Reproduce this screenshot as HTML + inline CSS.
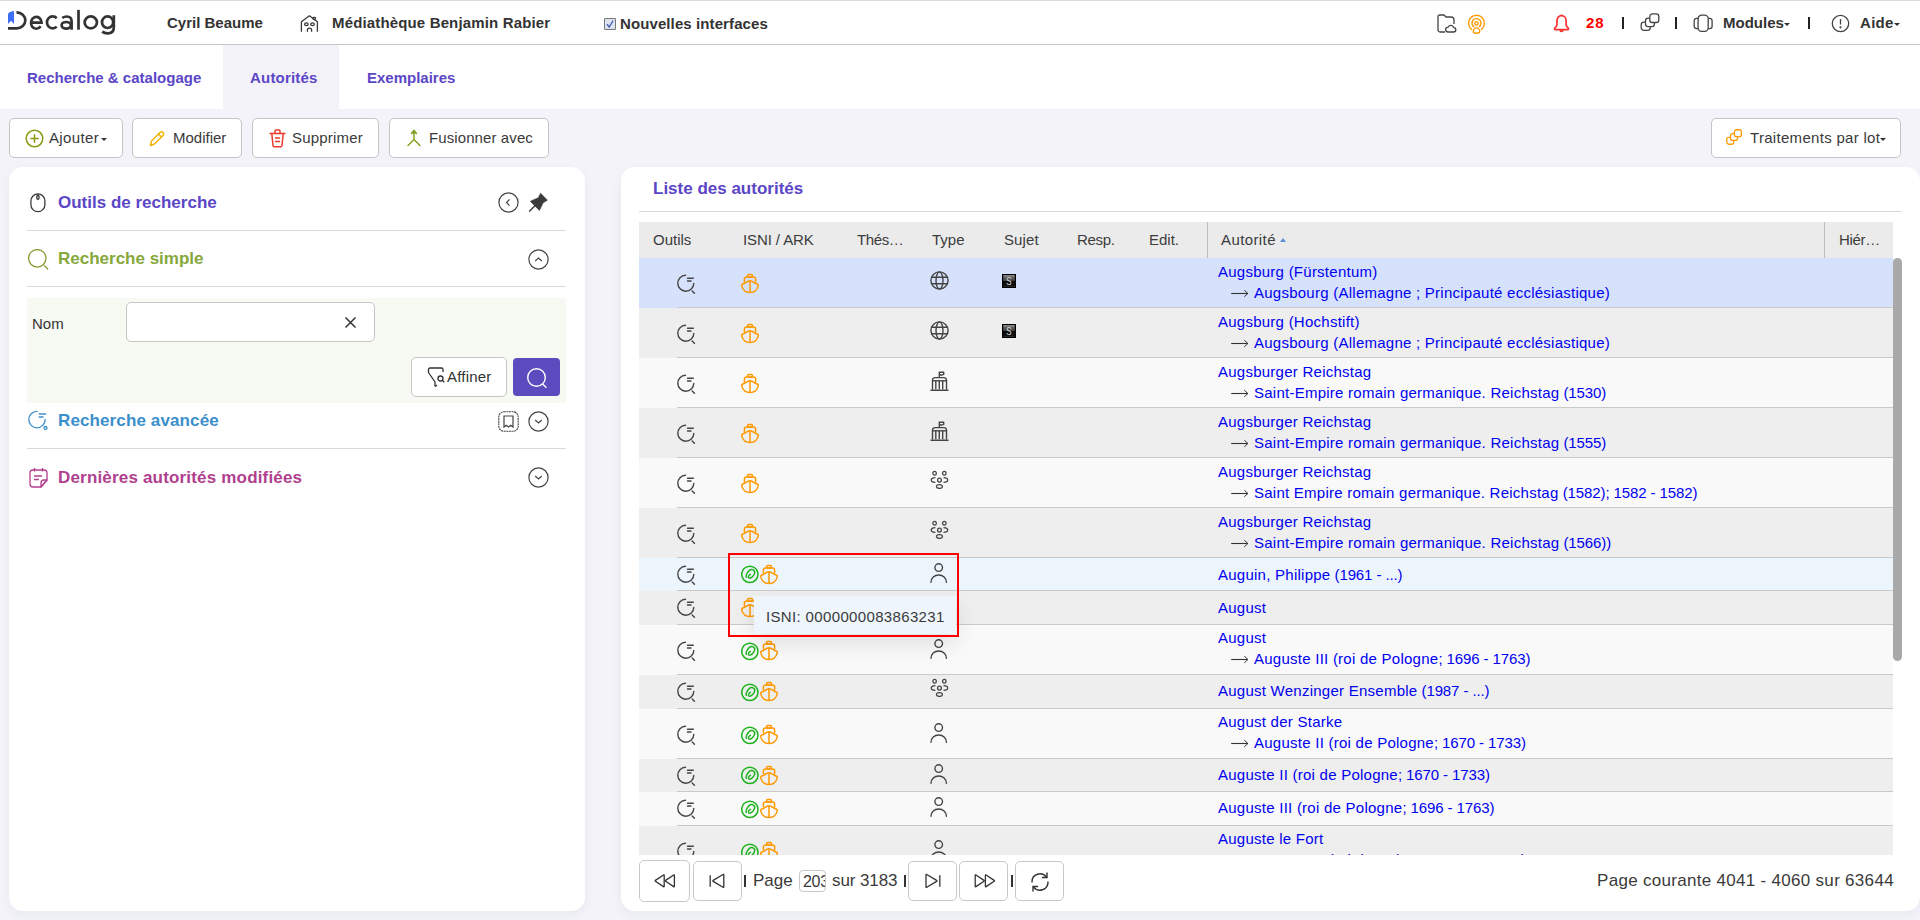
<!DOCTYPE html>
<html><head><meta charset="utf-8">
<style>
*{box-sizing:border-box;margin:0;padding:0}
html,body{width:1920px;height:920px;overflow:hidden}
body{position:relative;background:#f3f3f9;font-family:"Liberation Sans",sans-serif;color:#333}
.abs{position:absolute}
svg{display:block}
#top{position:absolute;left:0;top:0;width:1920px;height:45px;background:#fff;border-top:1px solid #dcdcdc;border-bottom:1px solid #c6c6c6}
.hb{position:absolute;font-weight:bold;font-size:15px;color:#333;line-height:18px;white-space:nowrap}
#tabs{position:absolute;left:0;top:45px;width:1920px;height:64px;background:#fff}
.tab{position:absolute;top:0;height:64px;font-weight:bold;font-size:15px;color:#5b46c6;line-height:18px;padding-top:24px;white-space:nowrap}
.btn{position:absolute;top:118px;height:40px;background:#fff;border:1px solid #c4c4c4;border-radius:5px}
.btn .t{position:absolute;top:10px;font-size:15px;line-height:18px;color:#3a3a3a;white-space:nowrap}
.btn .i{position:absolute}
.panel{position:absolute;background:#fff;border-radius:14px}
.ptitle{position:absolute;font-weight:bold;font-size:17px;line-height:20px;white-space:nowrap}
.sep{position:absolute;height:1px;background:#d9d9d9}
.th{position:absolute;top:0;font-size:15px;line-height:36px;color:#3c3c3c;white-space:nowrap}
.row{position:absolute;left:0;width:1254px}
.rline{position:absolute;left:38px;width:1216px;height:1px;background:#c9c9c9}
.ic{position:absolute}
.au{position:absolute;left:579px;font-size:15px;line-height:18px;color:#0000f0;white-space:nowrap;letter-spacing:0.25px}
.au2{position:absolute;left:592px;font-size:15px;line-height:18px;color:#0000f0;white-space:nowrap;letter-spacing:0.25px}
.arr{color:#222;display:inline-block;width:23px;letter-spacing:0}
.pbtn{position:absolute;top:861px;height:40px;width:49px;background:#fff;border:1px solid #c8c8c8;border-radius:5px}
.pt{position:absolute;font-size:17px;line-height:20px;color:#3a3a3a;white-space:nowrap}
</style></head><body>
<div id="top">
  <!-- logo -->
  <div class="abs" style="left:0px;top:-1px">
    <svg width="120" height="40" viewBox="0 0 120 40" fill="none" stroke="#333" stroke-width="2.7">
      <path d="M8 24 V14.5 Q8 11.5 14 11 V24 L11 20.8 Z" fill="#3d6ff5" stroke="none"/>
      <path d="M8 28.4 H16.5 A8.85 8.05 0 0 0 16.5 12.3" />
      <path d="M31 22.6 H41.6 A5.3 5.95 0 1 0 40.6 26.3" />
      <path d="M56.7 18.2 A5.7 5.95 0 1 0 56.7 26.6" />
      <path d="M62.3 17.9 Q64.5 16.5 66.5 16.5 Q71.6 16.5 71.6 21.2 V29.7" />
      <ellipse cx="66.2" cy="25.3" rx="4.6" ry="3.3"/>
      <path d="M78.5 9.9 V29.7" />
      <ellipse cx="90.8" cy="22.4" rx="6.15" ry="5.95"/>
      <ellipse cx="107.6" cy="22.2" rx="5.6" ry="5.8"/>
      <path d="M113.8 15.3 V27.5 Q113.8 33.3 107.6 33.3 Q104.2 33.3 102.2 31.6" />
    </svg>
  </div>
  <div class="hb" style="left:167px;top:13px">Cyril Beaume</div>
  <div class="abs" style="left:300px;top:13px">
    <svg width="19" height="19" viewBox="0 0 19 19" fill="none" stroke="#383838" stroke-width="1.3" stroke-linejoin="round"><path d="M1.4 17.8V7.8L9.4 1.8L17.4 7.8V17.8"/><rect x="13.1" y="3.3" width="2.3" height="2.3" rx="0.8"/><ellipse cx="6.4" cy="10.3" rx="1.8" ry="1.4"/><ellipse cx="12.5" cy="10.3" rx="1.8" ry="1.4"/><path d="M7.4 17.8V16.2A2.1 2.1 0 0 1 11.6 16.2V17.8"/></svg>
  </div>
  <div class="hb" style="left:332px;top:13px;letter-spacing:0.15px">Médiathèque Benjamin Rabier</div>
  <div class="abs" style="left:604px;top:17px;width:12px;height:12px;border:1px solid #767676;background:#dde3ef;border-radius:1px">
    <svg width="10" height="10" viewBox="0 0 10 10"><path d="M2 5.2 L4.2 8 L8.2 1.5" fill="none" stroke="#4a5fb5" stroke-width="1.4"/></svg>
  </div>
  <div class="hb" style="left:620px;top:14px;letter-spacing:0.1px">Nouvelles interfaces</div>
  <!-- right icons -->
  <div class="abs" style="left:1437px;top:13px">
    <svg width="20" height="20" viewBox="0 0 20 20" fill="none" stroke="#444" stroke-width="1.3" stroke-linejoin="round"><path d="M8 18H3a2 2 0 0 1-2-2V3a2 2 0 0 1 2-2h4l2 2h5a3 3 0 0 1 3 3v4"/><path d="M11 18h5.5a2.2 2.2 0 0 0 .2-4.4 3 3 0 0 0-5.6-.4 2.4 2.4 0 0 0-.1 4.8z"/></svg>
  </div>
  <div class="abs" style="left:1467px;top:13px">
    <svg width="20" height="21" viewBox="0 0 20 21" fill="none" stroke="#ff9a00" stroke-width="1.4" stroke-linecap="round"><path d="M4.6 15.4A7.9 7.9 0 1 1 14.4 15.4"/><path d="M6.7 12.6A4.5 4.5 0 1 1 12.3 12.6"/><circle cx="9.5" cy="9.3" r="1.7"/><path d="M9.5 13.9C7.6 13.9 6.3 15.9 6.3 17.5 6.3 18.7 7.5 19.3 9.5 19.3 11.5 19.3 12.7 18.7 12.7 17.5 12.7 15.9 11.4 13.9 9.5 13.9Z"/></svg>
  </div>
  <div class="abs" style="left:1553px;top:13px">
    <svg width="18" height="20" viewBox="0 0 18 20" fill="none" stroke="#ff3030" stroke-width="1.7" stroke-linejoin="round"><path d="M8.5 1.6C5.6 1.6 3.9 4 3.9 7V10.8C3.9 12.3 2.8 13.1 1.9 13.9 1.1 14.6 1.5 15.7 2.5 15.7H14.5C15.5 15.7 15.9 14.6 15.1 13.9 14.2 13.1 13.1 12.3 13.1 10.8V7C13.1 4 11.4 1.6 8.5 1.6Z"/><path d="M6.9 16.2Q8.5 18.6 10.1 16.2"/><path d="M8.5 0.6V1.6"/></svg>
  </div>
  <div class="hb" style="left:1586px;top:13px;color:#f00;font-size:15px;letter-spacing:1px">28</div>
  <div class="abs" style="left:1622px;top:16px;width:2px;height:12px;background:#222"></div>
  <div class="abs" style="left:1640px;top:12px">
    <svg width="20" height="19" viewBox="0 0 20 19" stroke="#444" stroke-width="1.3"><rect x="1.2" y="9.1" width="9" height="8.2" rx="2.6" fill="#fff"/><rect x="5.5" y="5.2" width="8.9" height="8.5" rx="2.6" fill="#fff"/><rect x="9.8" y="0.9" width="9" height="8.6" rx="2.6" fill="#fff"/></svg>
  </div>
  <div class="abs" style="left:1675px;top:16px;width:2px;height:12px;background:#222"></div>
  <div class="abs" style="left:1693px;top:13px">
    <svg width="21" height="19" viewBox="0 0 21 19" fill="none" stroke="#444" stroke-width="1.3"><rect x="5.1" y="1.2" width="10.1" height="16.1" rx="3.5"/><path d="M5.1 4.3H3.6A2.4 2.4 0 0 0 1.2 6.7V12.2A2.4 2.4 0 0 0 3.6 14.6H5.1M15.2 4.3H16.7A2.4 2.4 0 0 1 19.1 6.7V12.2A2.4 2.4 0 0 1 16.7 14.6H15.2"/></svg>
  </div>
  <div class="hb" style="left:1723px;top:13px">Modules</div>
  <div class="abs" style="left:1784px;top:22px;width:0;height:0;border-left:3px solid transparent;border-right:3px solid transparent;border-top:3px solid #333"></div>
  <div class="abs" style="left:1808px;top:16px;width:2px;height:12px;background:#222"></div>
  <div class="abs" style="left:1831px;top:13px">
    <svg width="19" height="19" viewBox="0 0 19 19" fill="none" stroke="#444" stroke-width="1.3"><circle cx="9.5" cy="9.5" r="8.2"/><path d="M9.5 5v5.5"/><circle cx="9.5" cy="13.3" r="0.5" fill="#444"/></svg>
  </div>
  <div class="hb" style="left:1860px;top:13px;letter-spacing:0.3px">Aide</div>
  <div class="abs" style="left:1894px;top:22px;width:0;height:0;border-left:3px solid transparent;border-right:3px solid transparent;border-top:3px solid #333"></div>
</div>

<div id="tabs">
  <div class="tab" style="left:27px">Recherche &amp; catalogage</div>
  <div class="tab" style="left:223px;width:116px;background:#f3f2f9;padding-left:27px;letter-spacing:0.2px">Autorités</div>
  <div class="tab" style="left:367px">Exemplaires</div>
</div>

<!-- toolbar -->
<div class="btn" style="left:9px;width:114px">
  <div class="i" style="left:15px;top:10px"><svg width="19" height="19" viewBox="0 0 19 19" fill="none" stroke="#8a9a10" stroke-width="1.5"><circle cx="9.5" cy="9.5" r="8.3"/><path d="M9.5 5.3v8.4M5.3 9.5h8.4"/></svg></div>
  <div class="t" style="left:39px;letter-spacing:0.35px">Ajouter</div>
  <div class="abs" style="left:91px;top:19px;border-left:3px solid transparent;border-right:3px solid transparent;border-top:3px solid #333"></div>
</div>
<div class="btn" style="left:132px;width:110px">
  <div class="i" style="left:16px;top:11px"><svg width="17" height="17" viewBox="0 0 17 17" fill="none" stroke="#f0b400" stroke-width="1.5" stroke-linejoin="round"><path d="M1.5 15.5l1-4.5L11 2.5a2.1 2.1 0 0 1 3 3L5.5 14z"/><path d="M9.5 4l3 3"/></svg></div>
  <div class="t" style="left:40px">Modifier</div>
</div>
<div class="btn" style="left:252px;width:127px">
  <div class="i" style="left:16px;top:10px"><svg width="17" height="19" viewBox="0 0 17 19" fill="none" stroke="#ee3a2a" stroke-width="1.5" stroke-linecap="round"><path d="M1 4.5h15"/><path d="M6 4.5V2a1 1 0 0 1 1-1h3a1 1 0 0 1 1 1v2.5"/><path d="M2.8 4.5l1.2 12a1.5 1.5 0 0 0 1.5 1.3h6a1.5 1.5 0 0 0 1.5-1.3l1.2-12"/><path d="M6.5 9h4M6.5 12.5h4"/></svg></div>
  <div class="t" style="left:39px;letter-spacing:0.2px">Supprimer</div>
</div>
<div class="btn" style="left:389px;width:160px">
  <div class="i" style="left:16px;top:10px"><svg width="16" height="18" viewBox="0 0 16 18" fill="none" stroke="#84a020" stroke-width="1.5" stroke-linecap="round"><path d="M8 2v8.5L2 16.5M8 10.5l6 6"/><path d="M5.5 4.5L8 1.5l2.5 3" fill="#84a020"/></svg></div>
  <div class="t" style="left:39px;letter-spacing:0.1px">Fusionner avec</div>
</div>
<div class="btn" style="left:1711px;width:190px">
  <div class="i" style="left:14px;top:10px"><svg width="18" height="18" viewBox="0 0 18 18" fill="#fff" stroke="#ff9a00" stroke-width="1.3"><rect x="0.75" y="8.35" width="6.9" height="6.9" rx="2"/><rect x="4.6" y="4.55" width="6.9" height="6.9" rx="2"/><rect x="8.45" y="0.75" width="6.9" height="6.9" rx="2"/></svg></div>
  <div class="t" style="left:38px;letter-spacing:0.3px">Traitements par lot</div>
  <div class="abs" style="left:168px;top:19px;border-left:3px solid transparent;border-right:3px solid transparent;border-top:3px solid #333"></div>
</div>

<!-- left panel -->
<div class="panel" style="left:9px;top:167px;width:576px;height:744px;box-shadow:0 4px 12px rgba(40,40,90,0.05)">
</div>
<div class="abs" style="left:29px;top:192px">
  <svg width="18" height="21" viewBox="0 0 18 21" fill="none" stroke="#383838" stroke-width="1.3"><rect x="1.9" y="1.9" width="14" height="17.8" rx="7"/><path d="M8.9 1.9V3.4"/><rect x="7.8" y="3.5" width="2.2" height="3.8" rx="1.1"/></svg>
</div>
<div class="ptitle" style="left:58px;top:193px;color:#5b46c6">Outils de recherche</div>
<div class="abs" style="left:498px;top:192px">
  <svg width="21" height="21" viewBox="0 0 21 21" fill="none" stroke="#444" stroke-width="1.2"><circle cx="10.5" cy="10.5" r="9.6"/><path d="M11.5 7.3l-3 3.2 3 3.2"/></svg>
</div>
<div class="abs" style="left:528px;top:192px">
  <svg width="21" height="21" viewBox="0 0 21 21"><path d="M12.6 1.2L19.4 8.2L15.2 10.7L11.4 18.5L2.3 9.3L10.3 5.7Z" fill="#3a3a3a" stroke="#3a3a3a" stroke-width="0.6" stroke-linejoin="round"/><path d="M7.2 13.4L1.2 19.6" stroke="#3a3a3a" stroke-width="1.4"/></svg>
</div>
<div class="sep" style="left:27px;top:230px;width:539px"></div>

<div class="abs" style="left:28px;top:249px">
  <svg width="22" height="22" viewBox="0 0 22 22" fill="none" stroke="#86962a" stroke-width="1.25" stroke-linecap="round"><circle cx="9.3" cy="9.3" r="8.7"/><path d="M16.3 16.6l3.4 3.4"/></svg>
</div>
<div class="ptitle" style="left:58px;top:249px;color:#86a83c">Recherche simple</div>
<div class="abs" style="left:528px;top:249px">
  <svg width="21" height="21" viewBox="0 0 21 21" fill="none" stroke="#444" stroke-width="1.2"><circle cx="10.5" cy="10.5" r="9.6"/><path d="M7.2 12l3.3-3 3.3 3"/></svg>
</div>
<div class="sep" style="left:27px;top:286px;width:539px"></div>

<div class="abs" style="left:27px;top:298px;width:539px;height:105px;background:#f7f9f3"></div>
<div class="abs" style="left:32px;top:315px;font-size:15px;line-height:18px;color:#333">Nom</div>
<div class="abs" style="left:126px;top:302px;width:249px;height:40px;background:#fff;border:1px solid #c6c6c6;border-radius:5px"></div>
<div class="abs" style="left:344px;top:316px">
  <svg width="13" height="13" viewBox="0 0 13 13" stroke="#333" stroke-width="1.5"><path d="M1.5 1.5l10 10M11.5 1.5l-10 10"/></svg>
</div>
<div class="abs" style="left:411px;top:357px;width:96px;height:40px;background:#fff;border:1px solid #c6c6c6;border-radius:5px"></div>
<div class="abs" style="left:427px;top:367px">
  <svg width="20" height="21" viewBox="0 0 20 21" fill="none" stroke="#333" stroke-width="1.3" stroke-linejoin="round"><path d="M8 19.5V15L1.5 5.5V2.5a1.5 1.5 0 0 1 1.5-1.5h11.5a1.5 1.5 0 0 1 1.5 1.5v2.5"/><path d="M8 19.5l2-1.5"/><circle cx="13.5" cy="11.5" r="2.5"/><path d="M15.3 13.3l2 2"/></svg>
</div>
<div class="abs" style="left:447px;top:368px;font-size:15px;line-height:18px;color:#333;letter-spacing:0.2px">Affiner</div>
<div class="abs" style="left:513px;top:358px;width:47px;height:38px;background:#5b4bbf;border-radius:4px"></div>
<div class="abs" style="left:526px;top:367px">
  <svg width="22" height="22" viewBox="0 0 22 22" fill="none" stroke="#fff" stroke-width="1.4" stroke-linecap="round"><circle cx="10.5" cy="10.5" r="8.8"/><path d="M17.2 17.5l2.8 2.8"/></svg>
</div>

<div class="abs" style="left:27px;top:410px">
  <svg width="23" height="22" viewBox="0 0 23 22" fill="none" stroke="#3d8fcc" stroke-width="1.3" stroke-linecap="round"><path d="M10 1.4A8.2 8.2 0 1 0 18.2 9.6"/><path d="M12.2 4H18.6M12.2 7H16"/><circle cx="18.5" cy="18" r="1.5"/></svg>
</div>
<div class="ptitle" style="left:58px;top:411px;color:#3b8fcb;letter-spacing:0.12px">Recherche avancée</div>
<div class="abs" style="left:498px;top:411px">
  <svg width="21" height="21" viewBox="0 0 21 21" fill="none" stroke="#444" stroke-width="1.1"><rect x="0.8" y="0.8" width="19.4" height="19.4" rx="5" stroke-dasharray="2 0.6"/><path d="M6 5h9v11l-2.2-1.8-2.3 1.8-2.3-1.8L6 16z" stroke-width="1.2"/></svg>
</div>
<div class="abs" style="left:528px;top:411px">
  <svg width="21" height="21" viewBox="0 0 21 21" fill="none" stroke="#444" stroke-width="1.2"><circle cx="10.5" cy="10.5" r="9.6"/><path d="M7.2 9l3.3 3 3.3-3"/></svg>
</div>
<div class="sep" style="left:27px;top:448px;width:539px"></div>

<div class="abs" style="left:29px;top:467px">
  <svg width="20" height="22" viewBox="0 0 20 22" fill="none" stroke="#b3408f" stroke-width="1.3" stroke-linejoin="round"><path d="M18 13V6a3 3 0 0 0-3-3H4a3 3 0 0 0-3 3v11a3 3 0 0 0 3 3h8z"/><path d="M18 13l-6 7v-4a3 3 0 0 1 3-3z"/><path d="M5.5 1v3.5M13.5 1v3.5"/><path d="M5 9h8M5 12.5h5"/></svg>
</div>
<div class="ptitle" style="left:58px;top:468px;color:#b0408f;letter-spacing:0.18px">Dernières autorités modifiées</div>
<div class="abs" style="left:528px;top:467px">
  <svg width="21" height="21" viewBox="0 0 21 21" fill="none" stroke="#444" stroke-width="1.2"><circle cx="10.5" cy="10.5" r="9.6"/><path d="M7.2 9l3.3 3 3.3-3"/></svg>
</div>

<!-- right panel -->
<div class="panel" style="left:621px;top:167px;width:1299px;height:744px;box-shadow:0 4px 12px rgba(40,40,90,0.05)"></div>
<div class="ptitle" style="left:653px;top:179px;color:#5b46c6">Liste des autorités</div>
<div class="sep" style="left:639px;top:211px;width:1263px"></div>

<!-- table -->
<div class="abs" style="left:639px;top:222px;width:1254px;height:633px;overflow:hidden">
  <div class="abs" style="left:0;top:0;width:1254px;height:36px;background:#ebebeb">
    <div class="th" style="left:14px">Outils</div>
    <div class="th" style="left:104px;letter-spacing:-0.1px">ISNI / ARK</div>
    <div class="th" style="left:218px;letter-spacing:-0.4px">Thés…</div>
    <div class="th" style="left:293px">Type</div>
    <div class="th" style="left:365px;letter-spacing:0.1px">Sujet</div>
    <div class="th" style="left:438px;letter-spacing:-0.3px">Resp.</div>
    <div class="th" style="left:510px">Edit.</div>
    <div class="abs" style="left:568px;top:0;width:1px;height:36px;background:#bdbdbd"></div>
    <div class="th" style="left:582px;letter-spacing:0.4px">Autorité</div>
    <div class="abs" style="left:641px;top:16px;border-left:3.5px solid transparent;border-right:3.5px solid transparent;border-bottom:4px solid #5b8fd6"></div>
    <div class="abs" style="left:1185px;top:0;width:1px;height:36px;background:#bdbdbd"></div>
    <div class="th" style="left:1200px;letter-spacing:-0.3px">Hiér…</div>
  </div>
  <div class="abs" style="left:0;top:36px;width:1254px;height:600px">
  <div class="row" style="top:0px;height:50px;background:#d6e1fc"><div class="ic" style="left:37px;top:16.0px"><svg width="20" height="20" viewBox="0 0 20 20" fill="none" stroke="#444" stroke-width="1.4" stroke-linecap="round"><path d="M9.5 1.2 A8 8 0 1 0 17.8 9.5"/><path d="M11.5 4.3h5.8M11.5 7h3.5"/><path d="M16.2 17l2.2 2.2"/></svg></div><div class="ic" style="left:102px;top:15.0px"><svg width="19" height="21" viewBox="0 0 19 21" fill="none" stroke="#ff9900" stroke-width="1.5" stroke-linejoin="round"><rect x="6.6" y="1.6" width="4.8" height="2.6" rx="1"/><path d="M3.4 9.5V6a2 2 0 0 1 2-2h7.2a2 2 0 0 1 2 2v3.5"/><path d="M9 7.8C6 7.8 4.6 10.6 1.8 11.1 0.6 11.3 0.6 12.4 0.9 13.4 2 17.2 5 19.6 9 19.6 13 19.6 16 17.2 17.1 13.4 17.4 12.4 17.4 11.3 16.2 11.1 13.4 10.6 12 7.8 9 7.8Z"/><path d="M9 7.8V19.6"/></svg></div><div class="ic" style="left:291px;top:13.0px"><svg width="19" height="19" viewBox="0 0 19 19" fill="none" stroke="#444" stroke-width="1.4"><circle cx="9.5" cy="9.5" r="8.6"/><ellipse cx="9.5" cy="9.5" rx="3.5" ry="8.6"/><path d="M1.2 6.3h16.6M1.2 12.8h16.6"/></svg></div><div class="ic" style="left:363px;top:16.0px"><svg width="14" height="14" viewBox="0 0 14 14"><defs><linearGradient id="sg" x1="0" y1="0" x2="0" y2="1"><stop offset="0" stop-color="#000"/><stop offset="0.1" stop-color="#aaa"/><stop offset="0.2" stop-color="#666"/><stop offset="0.47" stop-color="#444"/><stop offset="0.5" stop-color="#080808"/><stop offset="0.85" stop-color="#111"/><stop offset="0.92" stop-color="#444"/><stop offset="1" stop-color="#000"/></linearGradient></defs><rect x="0" y="0" width="14" height="14" fill="url(#sg)"/><rect x="0.6" y="0.6" width="12.8" height="12.8" fill="none" stroke="#000" stroke-width="1.2"/><text x="8.7" y="10.9" text-anchor="middle" font-family="Liberation Sans" font-size="10" fill="#d8d8d8" transform="scale(0.8 1)">S</text></svg></div><div class="au" style="top:5px">Augsburg (Fürstentum)</div><div class="au2" style="top:26px"><span class="arr"><svg width="23" height="18" viewBox="0 0 23 18" style="display:inline-block;vertical-align:top"><path d="M0.2 9.5H16.8" stroke="#333" stroke-width="1.1"/><path d="M13.3 6.2L16.9 9.5 13.3 12.8" fill="none" stroke="#333" stroke-width="1"/></svg></span>Augsbourg (Allemagne ; Principauté ecclésiastique)</div></div><div class="row" style="top:50px;height:50px;background:#eeeeee"><div class="ic" style="left:37px;top:16.0px"><svg width="20" height="20" viewBox="0 0 20 20" fill="none" stroke="#444" stroke-width="1.4" stroke-linecap="round"><path d="M9.5 1.2 A8 8 0 1 0 17.8 9.5"/><path d="M11.5 4.3h5.8M11.5 7h3.5"/><path d="M16.2 17l2.2 2.2"/></svg></div><div class="ic" style="left:102px;top:15.0px"><svg width="19" height="21" viewBox="0 0 19 21" fill="none" stroke="#ff9900" stroke-width="1.5" stroke-linejoin="round"><rect x="6.6" y="1.6" width="4.8" height="2.6" rx="1"/><path d="M3.4 9.5V6a2 2 0 0 1 2-2h7.2a2 2 0 0 1 2 2v3.5"/><path d="M9 7.8C6 7.8 4.6 10.6 1.8 11.1 0.6 11.3 0.6 12.4 0.9 13.4 2 17.2 5 19.6 9 19.6 13 19.6 16 17.2 17.1 13.4 17.4 12.4 17.4 11.3 16.2 11.1 13.4 10.6 12 7.8 9 7.8Z"/><path d="M9 7.8V19.6"/></svg></div><div class="ic" style="left:291px;top:13.0px"><svg width="19" height="19" viewBox="0 0 19 19" fill="none" stroke="#444" stroke-width="1.4"><circle cx="9.5" cy="9.5" r="8.6"/><ellipse cx="9.5" cy="9.5" rx="3.5" ry="8.6"/><path d="M1.2 6.3h16.6M1.2 12.8h16.6"/></svg></div><div class="ic" style="left:363px;top:16.0px"><svg width="14" height="14" viewBox="0 0 14 14"><defs><linearGradient id="sg" x1="0" y1="0" x2="0" y2="1"><stop offset="0" stop-color="#000"/><stop offset="0.1" stop-color="#aaa"/><stop offset="0.2" stop-color="#666"/><stop offset="0.47" stop-color="#444"/><stop offset="0.5" stop-color="#080808"/><stop offset="0.85" stop-color="#111"/><stop offset="0.92" stop-color="#444"/><stop offset="1" stop-color="#000"/></linearGradient></defs><rect x="0" y="0" width="14" height="14" fill="url(#sg)"/><rect x="0.6" y="0.6" width="12.8" height="12.8" fill="none" stroke="#000" stroke-width="1.2"/><text x="8.7" y="10.9" text-anchor="middle" font-family="Liberation Sans" font-size="10" fill="#d8d8d8" transform="scale(0.8 1)">S</text></svg></div><div class="au" style="top:5px">Augsburg (Hochstift)</div><div class="au2" style="top:26px"><span class="arr"><svg width="23" height="18" viewBox="0 0 23 18" style="display:inline-block;vertical-align:top"><path d="M0.2 9.5H16.8" stroke="#333" stroke-width="1.1"/><path d="M13.3 6.2L16.9 9.5 13.3 12.8" fill="none" stroke="#333" stroke-width="1"/></svg></span>Augsbourg (Allemagne ; Principauté ecclésiastique)</div></div><div class="rline" style="top:49px"></div><div class="row" style="top:100px;height:50px;background:#f9f9f9"><div class="ic" style="left:37px;top:16.0px"><svg width="20" height="20" viewBox="0 0 20 20" fill="none" stroke="#444" stroke-width="1.4" stroke-linecap="round"><path d="M9.5 1.2 A8 8 0 1 0 17.8 9.5"/><path d="M11.5 4.3h5.8M11.5 7h3.5"/><path d="M16.2 17l2.2 2.2"/></svg></div><div class="ic" style="left:102px;top:15.0px"><svg width="19" height="21" viewBox="0 0 19 21" fill="none" stroke="#ff9900" stroke-width="1.5" stroke-linejoin="round"><rect x="6.6" y="1.6" width="4.8" height="2.6" rx="1"/><path d="M3.4 9.5V6a2 2 0 0 1 2-2h7.2a2 2 0 0 1 2 2v3.5"/><path d="M9 7.8C6 7.8 4.6 10.6 1.8 11.1 0.6 11.3 0.6 12.4 0.9 13.4 2 17.2 5 19.6 9 19.6 13 19.6 16 17.2 17.1 13.4 17.4 12.4 17.4 11.3 16.2 11.1 13.4 10.6 12 7.8 9 7.8Z"/><path d="M9 7.8V19.6"/></svg></div><div class="ic" style="left:291px;top:13.0px"><svg width="19" height="20" viewBox="0 0 19 20" fill="none" stroke="#444" stroke-width="1.4" stroke-linejoin="round"><path d="M9.3 6.5V1.2h4.4v2.2l-2.2.8-2.2-.8"/><path d="M2.5 18.5V9.2a2.6 2.6 0 0 1 2.6-2.6h8.8a2.6 2.6 0 0 1 2.6 2.6v9.3"/><path d="M2.5 9.8h14"/><path d="M5.8 10v8.3M9.3 10v8.3M12.7 10v8.3"/><path d="M0.5 19.3h18" stroke-width="1.6"/></svg></div><div class="au" style="top:5px">Augsburger Reichstag</div><div class="au2" style="top:26px"><span class="arr"><svg width="23" height="18" viewBox="0 0 23 18" style="display:inline-block;vertical-align:top"><path d="M0.2 9.5H16.8" stroke="#333" stroke-width="1.1"/><path d="M13.3 6.2L16.9 9.5 13.3 12.8" fill="none" stroke="#333" stroke-width="1"/></svg></span>Saint-Empire romain germanique. Reichstag<span style="letter-spacing:-0.1px"> (1530)</span></div></div><div class="rline" style="top:99px"></div><div class="row" style="top:150px;height:50px;background:#eeeeee"><div class="ic" style="left:37px;top:16.0px"><svg width="20" height="20" viewBox="0 0 20 20" fill="none" stroke="#444" stroke-width="1.4" stroke-linecap="round"><path d="M9.5 1.2 A8 8 0 1 0 17.8 9.5"/><path d="M11.5 4.3h5.8M11.5 7h3.5"/><path d="M16.2 17l2.2 2.2"/></svg></div><div class="ic" style="left:102px;top:15.0px"><svg width="19" height="21" viewBox="0 0 19 21" fill="none" stroke="#ff9900" stroke-width="1.5" stroke-linejoin="round"><rect x="6.6" y="1.6" width="4.8" height="2.6" rx="1"/><path d="M3.4 9.5V6a2 2 0 0 1 2-2h7.2a2 2 0 0 1 2 2v3.5"/><path d="M9 7.8C6 7.8 4.6 10.6 1.8 11.1 0.6 11.3 0.6 12.4 0.9 13.4 2 17.2 5 19.6 9 19.6 13 19.6 16 17.2 17.1 13.4 17.4 12.4 17.4 11.3 16.2 11.1 13.4 10.6 12 7.8 9 7.8Z"/><path d="M9 7.8V19.6"/></svg></div><div class="ic" style="left:291px;top:13.0px"><svg width="19" height="20" viewBox="0 0 19 20" fill="none" stroke="#444" stroke-width="1.4" stroke-linejoin="round"><path d="M9.3 6.5V1.2h4.4v2.2l-2.2.8-2.2-.8"/><path d="M2.5 18.5V9.2a2.6 2.6 0 0 1 2.6-2.6h8.8a2.6 2.6 0 0 1 2.6 2.6v9.3"/><path d="M2.5 9.8h14"/><path d="M5.8 10v8.3M9.3 10v8.3M12.7 10v8.3"/><path d="M0.5 19.3h18" stroke-width="1.6"/></svg></div><div class="au" style="top:5px">Augsburger Reichstag</div><div class="au2" style="top:26px"><span class="arr"><svg width="23" height="18" viewBox="0 0 23 18" style="display:inline-block;vertical-align:top"><path d="M0.2 9.5H16.8" stroke="#333" stroke-width="1.1"/><path d="M13.3 6.2L16.9 9.5 13.3 12.8" fill="none" stroke="#333" stroke-width="1"/></svg></span>Saint-Empire romain germanique. Reichstag<span style="letter-spacing:-0.1px"> (1555)</span></div></div><div class="rline" style="top:149px"></div><div class="row" style="top:200px;height:50px;background:#f9f9f9"><div class="ic" style="left:37px;top:16.0px"><svg width="20" height="20" viewBox="0 0 20 20" fill="none" stroke="#444" stroke-width="1.4" stroke-linecap="round"><path d="M9.5 1.2 A8 8 0 1 0 17.8 9.5"/><path d="M11.5 4.3h5.8M11.5 7h3.5"/><path d="M16.2 17l2.2 2.2"/></svg></div><div class="ic" style="left:102px;top:15.0px"><svg width="19" height="21" viewBox="0 0 19 21" fill="none" stroke="#ff9900" stroke-width="1.5" stroke-linejoin="round"><rect x="6.6" y="1.6" width="4.8" height="2.6" rx="1"/><path d="M3.4 9.5V6a2 2 0 0 1 2-2h7.2a2 2 0 0 1 2 2v3.5"/><path d="M9 7.8C6 7.8 4.6 10.6 1.8 11.1 0.6 11.3 0.6 12.4 0.9 13.4 2 17.2 5 19.6 9 19.6 13 19.6 16 17.2 17.1 13.4 17.4 12.4 17.4 11.3 16.2 11.1 13.4 10.6 12 7.8 9 7.8Z"/><path d="M9 7.8V19.6"/></svg></div><div class="ic" style="left:291px;top:12.0px"><svg width="19" height="19" viewBox="0 0 19 19" fill="none" stroke="#444" stroke-width="1.3"><rect x="2.9" y="1.4" width="3.4" height="3.7" rx="1.6"/><rect x="12.6" y="1.4" width="3.4" height="3.7" rx="1.6"/><ellipse cx="9.45" cy="10.05" rx="1.9" ry="2"/><path d="M5.4 7.7C2.6 7.7 1.2 8.8 1.2 10S2.6 12.3 5.4 12.3M13.5 7.7C16.3 7.7 17.7 8.8 17.7 10S16.3 12.3 13.5 12.3"/><ellipse cx="9.45" cy="16.5" rx="3" ry="1.9"/></svg></div><div class="au" style="top:5px">Augsburger Reichstag</div><div class="au2" style="top:26px"><span class="arr"><svg width="23" height="18" viewBox="0 0 23 18" style="display:inline-block;vertical-align:top"><path d="M0.2 9.5H16.8" stroke="#333" stroke-width="1.1"/><path d="M13.3 6.2L16.9 9.5 13.3 12.8" fill="none" stroke="#333" stroke-width="1"/></svg></span>Saint Empire romain germanique. Reichstag<span style="letter-spacing:-0.1px"> (1582); 1582 - 1582)</span></div></div><div class="rline" style="top:199px"></div><div class="row" style="top:250px;height:50px;background:#eeeeee"><div class="ic" style="left:37px;top:16.0px"><svg width="20" height="20" viewBox="0 0 20 20" fill="none" stroke="#444" stroke-width="1.4" stroke-linecap="round"><path d="M9.5 1.2 A8 8 0 1 0 17.8 9.5"/><path d="M11.5 4.3h5.8M11.5 7h3.5"/><path d="M16.2 17l2.2 2.2"/></svg></div><div class="ic" style="left:102px;top:15.0px"><svg width="19" height="21" viewBox="0 0 19 21" fill="none" stroke="#ff9900" stroke-width="1.5" stroke-linejoin="round"><rect x="6.6" y="1.6" width="4.8" height="2.6" rx="1"/><path d="M3.4 9.5V6a2 2 0 0 1 2-2h7.2a2 2 0 0 1 2 2v3.5"/><path d="M9 7.8C6 7.8 4.6 10.6 1.8 11.1 0.6 11.3 0.6 12.4 0.9 13.4 2 17.2 5 19.6 9 19.6 13 19.6 16 17.2 17.1 13.4 17.4 12.4 17.4 11.3 16.2 11.1 13.4 10.6 12 7.8 9 7.8Z"/><path d="M9 7.8V19.6"/></svg></div><div class="ic" style="left:291px;top:12.0px"><svg width="19" height="19" viewBox="0 0 19 19" fill="none" stroke="#444" stroke-width="1.3"><rect x="2.9" y="1.4" width="3.4" height="3.7" rx="1.6"/><rect x="12.6" y="1.4" width="3.4" height="3.7" rx="1.6"/><ellipse cx="9.45" cy="10.05" rx="1.9" ry="2"/><path d="M5.4 7.7C2.6 7.7 1.2 8.8 1.2 10S2.6 12.3 5.4 12.3M13.5 7.7C16.3 7.7 17.7 8.8 17.7 10S16.3 12.3 13.5 12.3"/><ellipse cx="9.45" cy="16.5" rx="3" ry="1.9"/></svg></div><div class="au" style="top:5px">Augsburger Reichstag</div><div class="au2" style="top:26px"><span class="arr"><svg width="23" height="18" viewBox="0 0 23 18" style="display:inline-block;vertical-align:top"><path d="M0.2 9.5H16.8" stroke="#333" stroke-width="1.1"/><path d="M13.3 6.2L16.9 9.5 13.3 12.8" fill="none" stroke="#333" stroke-width="1"/></svg></span>Saint-Empire romain germanique. Reichstag<span style="letter-spacing:-0.1px"> (1566))</span></div></div><div class="rline" style="top:249px"></div><div class="row" style="top:300px;height:33px;background:#ecf4fc"><div class="ic" style="left:37px;top:6.5px"><svg width="20" height="20" viewBox="0 0 20 20" fill="none" stroke="#444" stroke-width="1.4" stroke-linecap="round"><path d="M9.5 1.2 A8 8 0 1 0 17.8 9.5"/><path d="M11.5 4.3h5.8M11.5 7h3.5"/><path d="M16.2 17l2.2 2.2"/></svg></div><div class="ic" style="left:102px;top:7.0px"><svg width="19" height="19" viewBox="0 0 19 19" fill="none" stroke="#1db31d" stroke-width="1.5" stroke-linecap="round"><circle cx="8.85" cy="9.35" r="8.15"/><path d="M5.3 12.4C4.4 11 6.4 7.2 8.4 5.4 9.8 4.1 12 4.2 13.2 5.8 14.2 7.2 13.4 9.6 11.6 11.6 10.4 13 8.4 13.8 7.6 12.6 7 11.6 8 10.2 9.4 9.4"/></svg></div><div class="ic" style="left:121px;top:5.5px"><svg width="19" height="21" viewBox="0 0 19 21" fill="none" stroke="#ff9900" stroke-width="1.5" stroke-linejoin="round"><rect x="6.6" y="1.6" width="4.8" height="2.6" rx="1"/><path d="M3.4 9.5V6a2 2 0 0 1 2-2h7.2a2 2 0 0 1 2 2v3.5"/><path d="M9 7.8C6 7.8 4.6 10.6 1.8 11.1 0.6 11.3 0.6 12.4 0.9 13.4 2 17.2 5 19.6 9 19.6 13 19.6 16 17.2 17.1 13.4 17.4 12.4 17.4 11.3 16.2 11.1 13.4 10.6 12 7.8 9 7.8Z"/><path d="M9 7.8V19.6"/></svg></div><div class="ic" style="left:291px;top:4.5px"><svg width="18" height="20" viewBox="0 0 18 20" fill="none" stroke="#444" stroke-width="1.4" stroke-linecap="round"><circle cx="8.7" cy="4.6" r="3.8"/><path d="M1 19.3c0-4.4 3.5-7.3 7.7-7.3s7.7 2.9 7.7 7.3"/></svg></div><div class="au" style="top:7.5px">Auguin, Philippe<span style="letter-spacing:-0.1px"> (1961 - ...)</span></div></div><div class="rline" style="top:299px"></div><div class="row" style="top:333px;height:34px;background:#eeeeee"><div class="ic" style="left:37px;top:7.0px"><svg width="20" height="20" viewBox="0 0 20 20" fill="none" stroke="#444" stroke-width="1.4" stroke-linecap="round"><path d="M9.5 1.2 A8 8 0 1 0 17.8 9.5"/><path d="M11.5 4.3h5.8M11.5 7h3.5"/><path d="M16.2 17l2.2 2.2"/></svg></div><div class="ic" style="left:102px;top:6.0px"><svg width="19" height="21" viewBox="0 0 19 21" fill="none" stroke="#ff9900" stroke-width="1.5" stroke-linejoin="round"><rect x="6.6" y="1.6" width="4.8" height="2.6" rx="1"/><path d="M3.4 9.5V6a2 2 0 0 1 2-2h7.2a2 2 0 0 1 2 2v3.5"/><path d="M9 7.8C6 7.8 4.6 10.6 1.8 11.1 0.6 11.3 0.6 12.4 0.9 13.4 2 17.2 5 19.6 9 19.6 13 19.6 16 17.2 17.1 13.4 17.4 12.4 17.4 11.3 16.2 11.1 13.4 10.6 12 7.8 9 7.8Z"/><path d="M9 7.8V19.6"/></svg></div><div class="au" style="top:8.0px">August</div></div><div class="rline" style="top:332px"></div><div class="row" style="top:367px;height:50px;background:#f9f9f9"><div class="ic" style="left:37px;top:16.0px"><svg width="20" height="20" viewBox="0 0 20 20" fill="none" stroke="#444" stroke-width="1.4" stroke-linecap="round"><path d="M9.5 1.2 A8 8 0 1 0 17.8 9.5"/><path d="M11.5 4.3h5.8M11.5 7h3.5"/><path d="M16.2 17l2.2 2.2"/></svg></div><div class="ic" style="left:102px;top:16.5px"><svg width="19" height="19" viewBox="0 0 19 19" fill="none" stroke="#1db31d" stroke-width="1.5" stroke-linecap="round"><circle cx="8.85" cy="9.35" r="8.15"/><path d="M5.3 12.4C4.4 11 6.4 7.2 8.4 5.4 9.8 4.1 12 4.2 13.2 5.8 14.2 7.2 13.4 9.6 11.6 11.6 10.4 13 8.4 13.8 7.6 12.6 7 11.6 8 10.2 9.4 9.4"/></svg></div><div class="ic" style="left:121px;top:15.0px"><svg width="19" height="21" viewBox="0 0 19 21" fill="none" stroke="#ff9900" stroke-width="1.5" stroke-linejoin="round"><rect x="6.6" y="1.6" width="4.8" height="2.6" rx="1"/><path d="M3.4 9.5V6a2 2 0 0 1 2-2h7.2a2 2 0 0 1 2 2v3.5"/><path d="M9 7.8C6 7.8 4.6 10.6 1.8 11.1 0.6 11.3 0.6 12.4 0.9 13.4 2 17.2 5 19.6 9 19.6 13 19.6 16 17.2 17.1 13.4 17.4 12.4 17.4 11.3 16.2 11.1 13.4 10.6 12 7.8 9 7.8Z"/><path d="M9 7.8V19.6"/></svg></div><div class="ic" style="left:291px;top:14.0px"><svg width="18" height="20" viewBox="0 0 18 20" fill="none" stroke="#444" stroke-width="1.4" stroke-linecap="round"><circle cx="8.7" cy="4.6" r="3.8"/><path d="M1 19.3c0-4.4 3.5-7.3 7.7-7.3s7.7 2.9 7.7 7.3"/></svg></div><div class="au" style="top:4px">August</div><div class="au2" style="top:25px"><span class="arr"><svg width="23" height="18" viewBox="0 0 23 18" style="display:inline-block;vertical-align:top"><path d="M0.2 9.5H16.8" stroke="#333" stroke-width="1.1"/><path d="M13.3 6.2L16.9 9.5 13.3 12.8" fill="none" stroke="#333" stroke-width="1"/></svg></span>Auguste III (roi de Pologne<span style="letter-spacing:-0.1px">; 1696 - 1763)</span></div></div><div class="rline" style="top:366px"></div><div class="row" style="top:417px;height:34px;background:#eeeeee"><div class="ic" style="left:37px;top:7.0px"><svg width="20" height="20" viewBox="0 0 20 20" fill="none" stroke="#444" stroke-width="1.4" stroke-linecap="round"><path d="M9.5 1.2 A8 8 0 1 0 17.8 9.5"/><path d="M11.5 4.3h5.8M11.5 7h3.5"/><path d="M16.2 17l2.2 2.2"/></svg></div><div class="ic" style="left:102px;top:7.5px"><svg width="19" height="19" viewBox="0 0 19 19" fill="none" stroke="#1db31d" stroke-width="1.5" stroke-linecap="round"><circle cx="8.85" cy="9.35" r="8.15"/><path d="M5.3 12.4C4.4 11 6.4 7.2 8.4 5.4 9.8 4.1 12 4.2 13.2 5.8 14.2 7.2 13.4 9.6 11.6 11.6 10.4 13 8.4 13.8 7.6 12.6 7 11.6 8 10.2 9.4 9.4"/></svg></div><div class="ic" style="left:121px;top:6.0px"><svg width="19" height="21" viewBox="0 0 19 21" fill="none" stroke="#ff9900" stroke-width="1.5" stroke-linejoin="round"><rect x="6.6" y="1.6" width="4.8" height="2.6" rx="1"/><path d="M3.4 9.5V6a2 2 0 0 1 2-2h7.2a2 2 0 0 1 2 2v3.5"/><path d="M9 7.8C6 7.8 4.6 10.6 1.8 11.1 0.6 11.3 0.6 12.4 0.9 13.4 2 17.2 5 19.6 9 19.6 13 19.6 16 17.2 17.1 13.4 17.4 12.4 17.4 11.3 16.2 11.1 13.4 10.6 12 7.8 9 7.8Z"/><path d="M9 7.8V19.6"/></svg></div><div class="ic" style="left:291px;top:3.0px"><svg width="19" height="19" viewBox="0 0 19 19" fill="none" stroke="#444" stroke-width="1.3"><rect x="2.9" y="1.4" width="3.4" height="3.7" rx="1.6"/><rect x="12.6" y="1.4" width="3.4" height="3.7" rx="1.6"/><ellipse cx="9.45" cy="10.05" rx="1.9" ry="2"/><path d="M5.4 7.7C2.6 7.7 1.2 8.8 1.2 10S2.6 12.3 5.4 12.3M13.5 7.7C16.3 7.7 17.7 8.8 17.7 10S16.3 12.3 13.5 12.3"/><ellipse cx="9.45" cy="16.5" rx="3" ry="1.9"/></svg></div><div class="au" style="top:7.0px">August Wenzinger Ensemble<span style="letter-spacing:-0.1px"> (1987 - ...)</span></div></div><div class="rline" style="top:416px"></div><div class="row" style="top:451px;height:50px;background:#f9f9f9"><div class="ic" style="left:37px;top:16.0px"><svg width="20" height="20" viewBox="0 0 20 20" fill="none" stroke="#444" stroke-width="1.4" stroke-linecap="round"><path d="M9.5 1.2 A8 8 0 1 0 17.8 9.5"/><path d="M11.5 4.3h5.8M11.5 7h3.5"/><path d="M16.2 17l2.2 2.2"/></svg></div><div class="ic" style="left:102px;top:16.5px"><svg width="19" height="19" viewBox="0 0 19 19" fill="none" stroke="#1db31d" stroke-width="1.5" stroke-linecap="round"><circle cx="8.85" cy="9.35" r="8.15"/><path d="M5.3 12.4C4.4 11 6.4 7.2 8.4 5.4 9.8 4.1 12 4.2 13.2 5.8 14.2 7.2 13.4 9.6 11.6 11.6 10.4 13 8.4 13.8 7.6 12.6 7 11.6 8 10.2 9.4 9.4"/></svg></div><div class="ic" style="left:121px;top:15.0px"><svg width="19" height="21" viewBox="0 0 19 21" fill="none" stroke="#ff9900" stroke-width="1.5" stroke-linejoin="round"><rect x="6.6" y="1.6" width="4.8" height="2.6" rx="1"/><path d="M3.4 9.5V6a2 2 0 0 1 2-2h7.2a2 2 0 0 1 2 2v3.5"/><path d="M9 7.8C6 7.8 4.6 10.6 1.8 11.1 0.6 11.3 0.6 12.4 0.9 13.4 2 17.2 5 19.6 9 19.6 13 19.6 16 17.2 17.1 13.4 17.4 12.4 17.4 11.3 16.2 11.1 13.4 10.6 12 7.8 9 7.8Z"/><path d="M9 7.8V19.6"/></svg></div><div class="ic" style="left:291px;top:14.0px"><svg width="18" height="20" viewBox="0 0 18 20" fill="none" stroke="#444" stroke-width="1.4" stroke-linecap="round"><circle cx="8.7" cy="4.6" r="3.8"/><path d="M1 19.3c0-4.4 3.5-7.3 7.7-7.3s7.7 2.9 7.7 7.3"/></svg></div><div class="au" style="top:4px">August der Starke</div><div class="au2" style="top:25px"><span class="arr"><svg width="23" height="18" viewBox="0 0 23 18" style="display:inline-block;vertical-align:top"><path d="M0.2 9.5H16.8" stroke="#333" stroke-width="1.1"/><path d="M13.3 6.2L16.9 9.5 13.3 12.8" fill="none" stroke="#333" stroke-width="1"/></svg></span>Auguste II (roi de Pologne<span style="letter-spacing:-0.1px">; 1670 - 1733)</span></div></div><div class="rline" style="top:450px"></div><div class="row" style="top:501px;height:33px;background:#eeeeee"><div class="ic" style="left:37px;top:6.5px"><svg width="20" height="20" viewBox="0 0 20 20" fill="none" stroke="#444" stroke-width="1.4" stroke-linecap="round"><path d="M9.5 1.2 A8 8 0 1 0 17.8 9.5"/><path d="M11.5 4.3h5.8M11.5 7h3.5"/><path d="M16.2 17l2.2 2.2"/></svg></div><div class="ic" style="left:102px;top:7.0px"><svg width="19" height="19" viewBox="0 0 19 19" fill="none" stroke="#1db31d" stroke-width="1.5" stroke-linecap="round"><circle cx="8.85" cy="9.35" r="8.15"/><path d="M5.3 12.4C4.4 11 6.4 7.2 8.4 5.4 9.8 4.1 12 4.2 13.2 5.8 14.2 7.2 13.4 9.6 11.6 11.6 10.4 13 8.4 13.8 7.6 12.6 7 11.6 8 10.2 9.4 9.4"/></svg></div><div class="ic" style="left:121px;top:5.5px"><svg width="19" height="21" viewBox="0 0 19 21" fill="none" stroke="#ff9900" stroke-width="1.5" stroke-linejoin="round"><rect x="6.6" y="1.6" width="4.8" height="2.6" rx="1"/><path d="M3.4 9.5V6a2 2 0 0 1 2-2h7.2a2 2 0 0 1 2 2v3.5"/><path d="M9 7.8C6 7.8 4.6 10.6 1.8 11.1 0.6 11.3 0.6 12.4 0.9 13.4 2 17.2 5 19.6 9 19.6 13 19.6 16 17.2 17.1 13.4 17.4 12.4 17.4 11.3 16.2 11.1 13.4 10.6 12 7.8 9 7.8Z"/><path d="M9 7.8V19.6"/></svg></div><div class="ic" style="left:291px;top:4.5px"><svg width="18" height="20" viewBox="0 0 18 20" fill="none" stroke="#444" stroke-width="1.4" stroke-linecap="round"><circle cx="8.7" cy="4.6" r="3.8"/><path d="M1 19.3c0-4.4 3.5-7.3 7.7-7.3s7.7 2.9 7.7 7.3"/></svg></div><div class="au" style="top:6.5px">Auguste II (roi de Pologne<span style="letter-spacing:-0.1px">; 1670 - 1733)</span></div></div><div class="rline" style="top:500px"></div><div class="row" style="top:534px;height:34px;background:#f9f9f9"><div class="ic" style="left:37px;top:7.0px"><svg width="20" height="20" viewBox="0 0 20 20" fill="none" stroke="#444" stroke-width="1.4" stroke-linecap="round"><path d="M9.5 1.2 A8 8 0 1 0 17.8 9.5"/><path d="M11.5 4.3h5.8M11.5 7h3.5"/><path d="M16.2 17l2.2 2.2"/></svg></div><div class="ic" style="left:102px;top:7.5px"><svg width="19" height="19" viewBox="0 0 19 19" fill="none" stroke="#1db31d" stroke-width="1.5" stroke-linecap="round"><circle cx="8.85" cy="9.35" r="8.15"/><path d="M5.3 12.4C4.4 11 6.4 7.2 8.4 5.4 9.8 4.1 12 4.2 13.2 5.8 14.2 7.2 13.4 9.6 11.6 11.6 10.4 13 8.4 13.8 7.6 12.6 7 11.6 8 10.2 9.4 9.4"/></svg></div><div class="ic" style="left:121px;top:6.0px"><svg width="19" height="21" viewBox="0 0 19 21" fill="none" stroke="#ff9900" stroke-width="1.5" stroke-linejoin="round"><rect x="6.6" y="1.6" width="4.8" height="2.6" rx="1"/><path d="M3.4 9.5V6a2 2 0 0 1 2-2h7.2a2 2 0 0 1 2 2v3.5"/><path d="M9 7.8C6 7.8 4.6 10.6 1.8 11.1 0.6 11.3 0.6 12.4 0.9 13.4 2 17.2 5 19.6 9 19.6 13 19.6 16 17.2 17.1 13.4 17.4 12.4 17.4 11.3 16.2 11.1 13.4 10.6 12 7.8 9 7.8Z"/><path d="M9 7.8V19.6"/></svg></div><div class="ic" style="left:291px;top:5.0px"><svg width="18" height="20" viewBox="0 0 18 20" fill="none" stroke="#444" stroke-width="1.4" stroke-linecap="round"><circle cx="8.7" cy="4.6" r="3.8"/><path d="M1 19.3c0-4.4 3.5-7.3 7.7-7.3s7.7 2.9 7.7 7.3"/></svg></div><div class="au" style="top:7.0px">Auguste III (roi de Pologne<span style="letter-spacing:-0.1px">; 1696 - 1763)</span></div></div><div class="rline" style="top:533px"></div><div class="row" style="top:568px;height:50px;background:#eeeeee"><div class="ic" style="left:37px;top:16.0px"><svg width="20" height="20" viewBox="0 0 20 20" fill="none" stroke="#444" stroke-width="1.4" stroke-linecap="round"><path d="M9.5 1.2 A8 8 0 1 0 17.8 9.5"/><path d="M11.5 4.3h5.8M11.5 7h3.5"/><path d="M16.2 17l2.2 2.2"/></svg></div><div class="ic" style="left:102px;top:16.5px"><svg width="19" height="19" viewBox="0 0 19 19" fill="none" stroke="#1db31d" stroke-width="1.5" stroke-linecap="round"><circle cx="8.85" cy="9.35" r="8.15"/><path d="M5.3 12.4C4.4 11 6.4 7.2 8.4 5.4 9.8 4.1 12 4.2 13.2 5.8 14.2 7.2 13.4 9.6 11.6 11.6 10.4 13 8.4 13.8 7.6 12.6 7 11.6 8 10.2 9.4 9.4"/></svg></div><div class="ic" style="left:121px;top:15.0px"><svg width="19" height="21" viewBox="0 0 19 21" fill="none" stroke="#ff9900" stroke-width="1.5" stroke-linejoin="round"><rect x="6.6" y="1.6" width="4.8" height="2.6" rx="1"/><path d="M3.4 9.5V6a2 2 0 0 1 2-2h7.2a2 2 0 0 1 2 2v3.5"/><path d="M9 7.8C6 7.8 4.6 10.6 1.8 11.1 0.6 11.3 0.6 12.4 0.9 13.4 2 17.2 5 19.6 9 19.6 13 19.6 16 17.2 17.1 13.4 17.4 12.4 17.4 11.3 16.2 11.1 13.4 10.6 12 7.8 9 7.8Z"/><path d="M9 7.8V19.6"/></svg></div><div class="ic" style="left:291px;top:14.0px"><svg width="18" height="20" viewBox="0 0 18 20" fill="none" stroke="#444" stroke-width="1.4" stroke-linecap="round"><circle cx="8.7" cy="4.6" r="3.8"/><path d="M1 19.3c0-4.4 3.5-7.3 7.7-7.3s7.7 2.9 7.7 7.3"/></svg></div><div class="au" style="top:4px">Auguste le Fort</div><div class="au2" style="top:25px"><span class="arr"><svg width="23" height="18" viewBox="0 0 23 18" style="display:inline-block;vertical-align:top"><path d="M0.2 9.5H16.8" stroke="#333" stroke-width="1.1"/><path d="M13.3 6.2L16.9 9.5 13.3 12.8" fill="none" stroke="#333" stroke-width="1"/></svg></span>Auguste II (roi de Pologne<span style="letter-spacing:-0.1px">; 1670 - 1733)</span></div></div><div class="rline" style="top:567px"></div>
  </div>
</div>
<!-- scrollbar -->
<div class="abs" style="left:1893px;top:258px;width:9px;height:403px;background:#a9a9a9;border-radius:5px"></div>

<!-- tooltip -->
<div class="abs" style="left:754px;top:596px;width:202px;height:38px;background:#eef5fc;box-shadow:0 10px 22px rgba(0,0,0,0.10)">
  <div class="abs" style="left:12px;top:12px;font-size:15px;line-height:18px;color:#3a3a3a;letter-spacing:0.35px;white-space:nowrap">ISNI: 0000000083863231</div>
</div>
<div class="abs" style="left:728px;top:553px;width:231px;height:84px;border:2px solid #f00"></div>

<!-- pager -->
<div class="pbtn" style="left:639px;width:51px;top:860px;height:42px"><div class="abs" style="left:14px;top:12px"><svg width="22" height="17" viewBox="0 0 22 17" fill="none" stroke="#333" stroke-width="1.3" stroke-linejoin="round"><path d="M10.2 2.4Q10.2 1.6 9.5 2L1.4 7.4Q0.8 7.8 1.4 8.2L9.5 13.6Q10.2 14 10.2 13.2Z"/><path d="M20.4 2.4Q20.4 1.6 19.7 2L11.6 7.4Q11 7.8 11.6 8.2L19.7 13.6Q20.4 14 20.4 13.2Z"/></svg></div></div>
<div class="pbtn" style="left:693px"><div class="abs" style="left:15px;top:11px"><svg width="18" height="17" viewBox="0 0 18 17" fill="none" stroke="#333" stroke-width="1.3" stroke-linejoin="round"><path d="M1.2 2.2v11.6"/><path d="M14.8 2Q14.8 1 14 1.5L4.2 7.4Q3.5 7.9 4.2 8.4L14 14.3Q14.8 14.8 14.8 13.8Z"/></svg></div></div>
<div class="abs" style="left:744px;top:875px;width:2px;height:12px;background:#333"></div>
<div class="pt" style="left:753px;top:871px">Page</div>
<div class="abs" style="left:799px;top:870px;width:27px;height:22px;border:1px solid #c8c8c8;border-radius:4px;background:#fff;overflow:hidden">
  <div class="abs" style="left:3px;top:1px;font-size:16px;line-height:20px;color:#3a3a3a;letter-spacing:-0.3px">203</div>
</div>
<div class="pt" style="left:832px;top:871px;letter-spacing:-0.1px">sur 3183</div>
<div class="abs" style="left:904px;top:875px;width:2px;height:12px;background:#333"></div>
<div class="pbtn" style="left:908px"><div class="abs" style="left:15px;top:11px"><svg width="18" height="17" viewBox="0 0 18 17" fill="none" stroke="#333" stroke-width="1.3" stroke-linejoin="round"><path d="M2 2Q2 1 2.8 1.5L12.6 7.4Q13.3 7.9 12.6 8.4L2.8 14.3Q2 14.8 2 13.8Z"/><path d="M15.8 2.2v11.6"/></svg></div></div>
<div class="pbtn" style="left:959px"><div class="abs" style="left:14px;top:11px"><svg width="22" height="17" viewBox="0 0 22 17" fill="none" stroke="#333" stroke-width="1.3" stroke-linejoin="round"><path d="M1.2 2.4Q1.2 1.6 1.9 2L10 7.4Q10.6 7.8 10 8.2L1.9 13.6Q1.2 14 1.2 13.2Z"/><path d="M11.4 2.4Q11.4 1.6 12.1 2L20.2 7.4Q20.8 7.8 20.2 8.2L12.1 13.6Q11.4 14 11.4 13.2Z"/></svg></div></div>
<div class="abs" style="left:1011px;top:875px;width:2px;height:12px;background:#333"></div>
<div class="pbtn" style="left:1015px"><div class="abs" style="left:13px;top:9px"><svg width="22" height="22" viewBox="0 0 22 22" fill="none" stroke="#333" stroke-width="1.4" stroke-linecap="round"><path d="M3 11a8 8 0 0 1 14.5-4.8"/><path d="M18 2v4.5h-4.5"/><path d="M19 11a8 8 0 0 1-14.5 4.8"/><path d="M4 20v-4.5h4.5"/></svg></div></div>
<div class="pt" style="left:1597px;top:871px;letter-spacing:0.3px">Page courante 4041 - 4060 sur 63644</div>
</body></html>
